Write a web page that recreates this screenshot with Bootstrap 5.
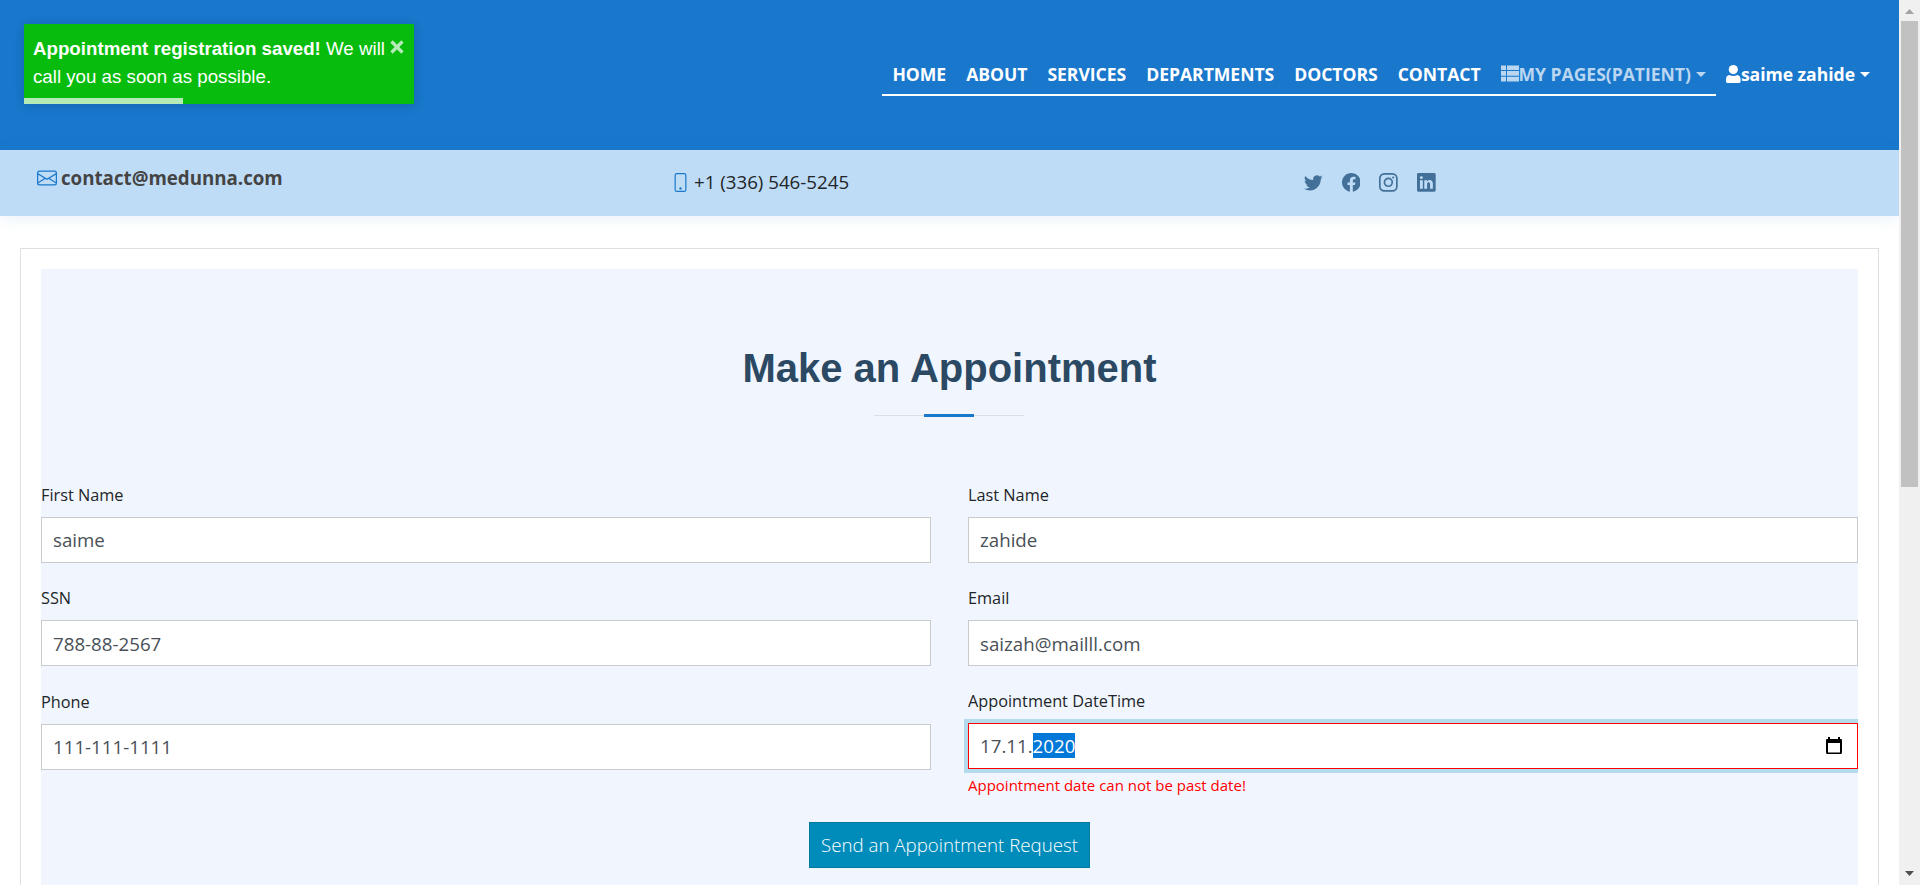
<!DOCTYPE html>
<html lang="en">
<head>
<meta charset="utf-8">
<title>Medunna - Make an Appointment</title>
<link href="https://cdn.jsdelivr.net/npm/bootstrap@5.3.0/dist/css/bootstrap.min.css" rel="stylesheet">
<style>
html,body{height:885px;overflow:hidden}
body{font-family:"Open Sans",sans-serif;font-size:18.72px;color:#212529;background:#fff}
svg{display:block;flex:none}
.app-shell{height:885px}
.page-area{width:1899px;overflow:hidden}
.site-header{height:150px;background:#1977cc;padding-right:19px}
.site-header a{color:#fff;font-weight:700;font-size:17.6px;letter-spacing:-.045px;line-height:27px;white-space:nowrap;text-decoration:none}
.main-menu{border-bottom:2px solid #fff;height:41px;padding-top:6px;margin-top:55px}
.main-menu a,.user-menu{padding:0 10px}
.main-menu a.muted-link{color:#bad6f0}
.user-menu{margin-top:61px}
.nav-glyph{margin-top:4px}
.caret-down{display:inline-block;margin-left:5px;vertical-align:4px;border:5px solid transparent;border-top-color:currentColor;border-bottom:0}
.contact-bar{height:66px;background:#bfdcf6;box-shadow:0 2px 15px rgba(25,119,204,.1)}
.contact-bar .bar-mail{width:635px;padding-left:37px;font-weight:700;color:#444;margin-top:-10px}
.contact-bar .bar-phone{width:631px;padding-left:36px;margin-top:-1px}
.contact-bar .bar-social{padding-left:38px;gap:19px;color:#437099;margin-top:-1px}
.toast-box{left:24px;top:24px;width:390px;height:80px;background:#07bc0c;color:#fff;border-radius:1px;box-shadow:0 1px 10px 0 rgba(0,0,0,.1),0 2px 15px 0 rgba(0,0,0,.05);font:18.72px/28px "Liberation Sans",sans-serif;padding:11px 9px;z-index:5;white-space:nowrap}
.toast-box .toast-x{right:10px;top:16px}
.toast-box .toast-bar{left:0;bottom:0;width:159px;height:6px;background:rgba(255,255,255,.7)}
.frame-card{margin:32px 20px 0;border:1px solid #dedfe0;padding:20px;height:700px}
.form-section{background:#f1f6fe;height:700px}
.form-section h1{font:700 40px/48px "Liberation Sans",sans-serif;color:#2c4964;padding-top:75px;margin:0}
.title-rule{width:150px;height:3px;margin:22px 0 0 833px;background:linear-gradient(#1977cc,#1977cc) 50px 0/50px 3px no-repeat,linear-gradient(#dcdfe2,#dcdfe2) 0 1px/150px 1px no-repeat}
.form-grid{display:grid;grid-template-columns:890px 890px;column-gap:37px;grid-auto-rows:103.3px;padding-top:64px;height:405px}
.form-grid label{display:block;font-size:16.3px;line-height:24px;margin-bottom:10px;padding-top:2px;color:#212529}
.form-grid .form-control{border:1px solid #c8cbce;border-radius:0;height:46px;font-size:18.72px;color:#495057;background:#fff;padding:1px 11px 0;display:flex;align-items:center}
.form-grid .date-field{border-color:#f00;box-shadow:0 0 0 4px #b3dbeb;padding:0 15px 0 11px}
.clip-right{clip-path:inset(0 0 -60px -10px);margin-top:-1px}
.year-sel{background:#0078d7;color:#fff;line-height:25px}
.err-msg{color:#f00;font-size:15px;line-height:22px;margin-top:5px}
.send-btn{background:#008cba;border:1px solid #0079a1;border-radius:0;color:#fff;font-size:18.72px;font-weight:300;height:46px;width:281px;padding:0}
.scroll-rail{width:21px;background:#f0f0f0}
.scroll-thumb{width:17px;height:466px;background:#c1c1c1;margin:21px 0 0 2px}
</style>
</head>
<body>
<div class="app-shell d-flex">
<main class="page-area">
  <header class="site-header d-flex justify-content-end">
    <nav class="main-menu d-flex">
      <a href="#">HOME</a><a href="#">ABOUT</a><a href="#">SERVICES</a><a href="#">DEPARTMENTS</a><a href="#">DOCTORS</a><a href="#">CONTACT</a>
      <a href="#" class="muted-link d-flex"><svg class="nav-glyph" width="18" height="17" viewBox="0 0 18 16" fill="currentColor"><path d="M0 0h5v4.6H0zM6 0h12v4.6H6zM0 5.6h5v4.6H0zM6 5.6h12v4.6H6zM0 11.2h5V16H0zM6 11.2h12V16H6z"/></svg><span>MY PAGES(PATIENT)<i class="caret-down"></i></span></a>
    </nav>
    <a href="#" class="user-menu d-flex"><svg class="nav-glyph" width="15" height="18" viewBox="0 0 15 18" fill="currentColor"><circle cx="7.3" cy="4.6" r="4.6"/><path d="M3.5 10c2.4 1.2 5.2 1.2 7.6 0 2.3.2 3.5 2 3.5 4.400V16.500Q14.600 18 13 18H1.600Q0 18 0 16.500V14.400C0 12 1.200 10.200 3.500 10z"/></svg><span>saime zahide<i class="caret-down"></i></span></a>
  </header>
  <section class="contact-bar d-flex align-items-center">
    <div class="bar-mail d-flex align-items-center"><svg width="20" height="20" viewBox="0 0 16 16" fill="#1977cc" class="me-1"><path d="M0 4a2 2 0 0 1 2-2h12a2 2 0 0 1 2 2v8a2 2 0 0 1-2 2H2a2 2 0 0 1-2-2V4Zm2-1a1 1 0 0 0-1 1v.217l7 4.200 7-4.200V4a1 1 0 0 0-1-1H2Zm13 2.383-4.708 2.825L15 11.105V5.383Zm-.034 6.876-5.640-3.471L8 9.583l-1.326-.795-5.640 3.470A1 1 0 0 0 2 13h12a1 1 0 0 0 .966-.741ZM1 11.105l4.708-2.897L1 5.383v5.722Z"/></svg><span>contact@medunna.com</span></div>
    <div class="bar-phone d-flex align-items-center"><svg width="19" height="19" viewBox="0 0 16 16" fill="#1977cc" class="me-1"><path d="M11 1a1 1 0 0 1 1 1v12a1 1 0 0 1-1 1H5a1 1 0 0 1-1-1V2a1 1 0 0 1 1-1h6zM5 0a2 2 0 0 0-2 2v12a2 2 0 0 0 2 2h6a2 2 0 0 0 2-2V2a2 2 0 0 0-2-2H5z"/><path d="M8 14a1 1 0 1 0 0-2 1 1 0 0 0 0 2z"/></svg><span>+1 (336) 546-5245</span></div>
    <div class="bar-social d-flex">
      <svg width="18.700" height="18.700" viewBox="0 0 16 16" fill="currentColor"><path d="M5.026 15c6.038 0 9.341-5.003 9.341-9.334 0-.14 0-.282-.006-.422A6.685 6.685 0 0 0 16 3.542a6.658 6.658 0 0 1-1.889.518 3.301 3.301 0 0 0 1.447-1.817 6.533 6.533 0 0 1-2.087.793A3.286 3.286 0 0 0 7.875 6.030a9.325 9.325 0 0 1-6.767-3.429 3.289 3.289 0 0 0 1.018 4.382A3.323 3.323 0 0 1 .640 6.575v.045a3.288 3.288 0 0 0 2.632 3.218 3.203 3.203 0 0 1-.865.115 3.230 3.230 0 0 1-.614-.057 3.283 3.283 0 0 0 3.067 2.277A6.588 6.588 0 0 1 .780 13.580a6.320 6.320 0 0 1-.780-.045A9.344 9.344 0 0 0 5.026 15z"/></svg>
      <svg width="18.700" height="18.700" viewBox="0 0 16 16" fill="currentColor"><path d="M16 8.049c0-4.446-3.582-8.050-8-8.050C3.580 0-.002 3.603-.002 8.050c0 4.017 2.926 7.347 6.750 7.951v-5.625h-2.030V8.050H6.750V6.275c0-2.017 1.195-3.131 3.022-3.131.876 0 1.791.157 1.791.157v1.980h-1.009c-.993 0-1.303.621-1.303 1.258v1.510h2.218l-.354 2.326H9.250V16c3.824-.604 6.750-3.934 6.750-7.951z"/></svg>
      <svg width="18.700" height="18.700" viewBox="0 0 19 19" fill="none" stroke="currentColor" stroke-width="1.700"><rect x=".85" y=".85" width="17.300" height="17.300" rx="4.500"/><circle cx="9.500" cy="9.500" r="4"/><circle cx="14.400" cy="4.600" r="1.100" fill="currentColor" stroke="none"/></svg>
      <svg width="18.700" height="18.700" viewBox="0 0 16 16" fill="currentColor"><path d="M0 1.146C0 .513.526 0 1.175 0h13.650C15.474 0 16 .513 16 1.146v13.708c0 .633-.526 1.146-1.175 1.146H1.175C.526 16 0 15.487 0 14.854V1.146zm4.943 12.248V6.169H2.542v7.225h2.401zm-1.200-8.212c.837 0 1.358-.554 1.358-1.248-.015-.709-.520-1.248-1.342-1.248-.822 0-1.359.540-1.359 1.248 0 .694.521 1.248 1.327 1.248h.016zm4.908 8.212V9.359c0-.216.016-.432.080-.586.173-.431.568-.878 1.232-.878.869 0 1.216.662 1.216 1.634v3.865h2.401V9.250c0-2.220-1.184-3.252-2.764-3.252-1.274 0-1.845.700-2.165 1.193v.025h-.016l.016-.025V6.169h-2.400c.030.678 0 7.225 0 7.225h2.400z"/></svg>
    </div>
  </section>
  <div class="frame-card">
    <section class="form-section">
      <h1 class="text-center">Make an Appointment</h1>
      <div class="title-rule"></div>
      <form class="form-grid">
        <div><label>First Name</label><div class="form-control">saime</div></div>
        <div><label>Last Name</label><div class="form-control">zahide</div></div>
        <div><label>SSN</label><div class="form-control">788-88-2567</div></div>
        <div><label>Email</label><div class="form-control">saizah@mailll.com</div></div>
        <div><label>Phone</label><div class="form-control">111-111-1111</div></div>
        <div class="clip-right"><label>Appointment DateTime</label><div class="form-control date-field"><span>17.11.</span><span class="year-sel">2020</span><svg class="ms-auto" width="16" height="18" viewBox="0 0 16 18"><path d="M2 0h2v2h8V0h2v2h1q1 0 1 1v12q0 2-1 2H1q-1 0-1-2V3q0-1 1-1h1zM2 6v9.500h12V6z" fill="#000" fill-rule="evenodd"/></svg></div><div class="err-msg">Appointment date can not be past date!</div></div>
      </form>
      <div class="text-center"><button type="button" class="btn send-btn">Send an Appointment Request</button></div>
    </section>
  </div>
</main>
<aside class="scroll-rail d-flex flex-column position-relative">
  <svg class="position-absolute" style="left:6px;top:9px" width="9" height="5" viewBox="0 0 9 5"><path d="M4.500 0 9 5H0z" fill="#a3a3a3"/></svg>
  <div class="scroll-thumb"></div>
  <svg class="mt-auto" style="margin:0 0 9px 6px" width="9" height="5" viewBox="0 0 9 5"><path d="M0 0h9L4.500 5z" fill="#505050"/></svg>
</aside>
</div>
<div class="toast-box position-absolute"><b>Appointment registration saved!</b> We will<br>call you as soon as possible.
  <svg class="toast-x position-absolute" width="14" height="14" viewBox="0 0 14 14"><path d="M1.500 1.500l11 11M12.500 1.500l-11 11" stroke="#fff" stroke-opacity=".7" stroke-width="3.200"/></svg>
  <div class="toast-bar position-absolute"></div>
</div>
</body>
</html>
